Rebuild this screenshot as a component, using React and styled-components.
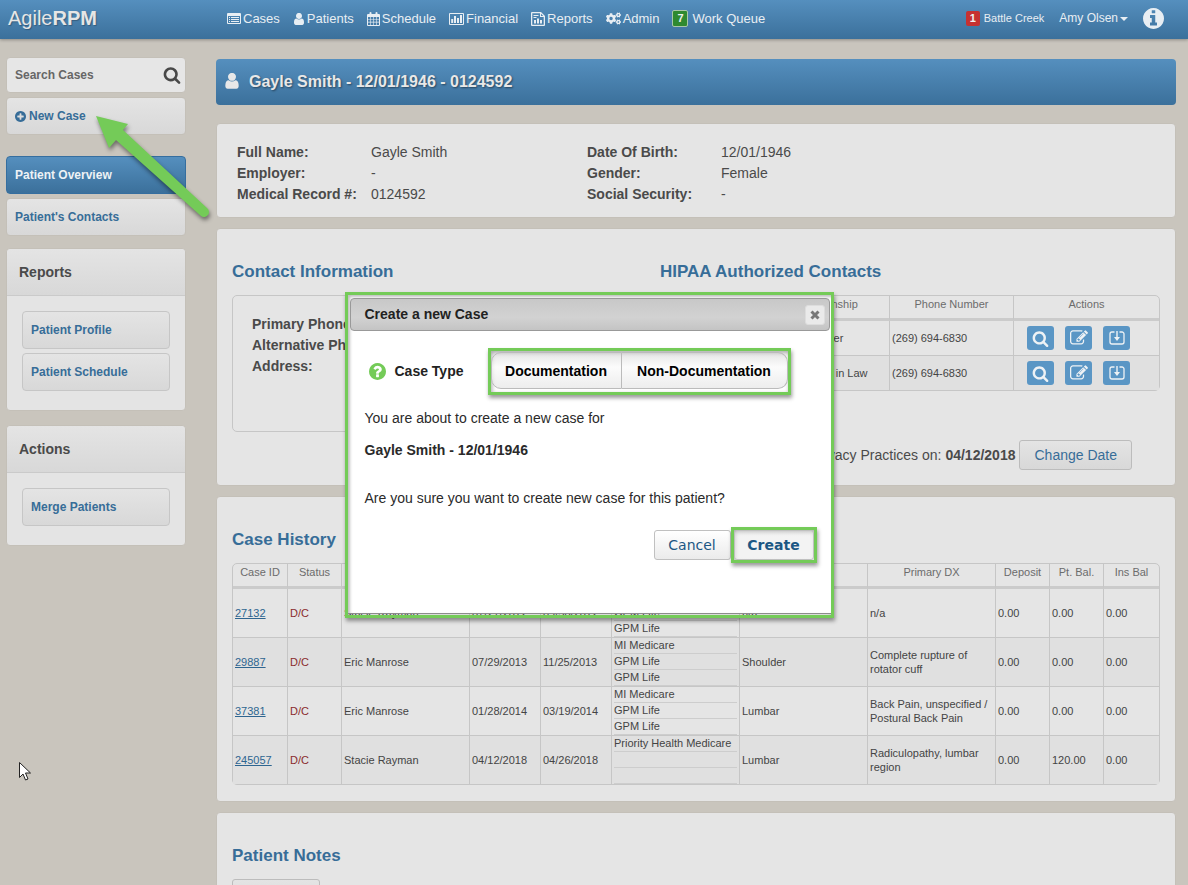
import React from 'react';
import styled, { createGlobalStyle, css } from 'styled-components';
import { FaCogs } from 'react-icons/fa';

const GREEN = '#74cb58';
const LINE = '#c6c6c6';

const GlobalStyle = createGlobalStyle`
  *, *::before, *::after { box-sizing: border-box; }
  body {
    margin: 0;
    background: #c9c5bd;
    color: #4a4a4a;
    font-family: 'Liberation Sans', Arial, sans-serif;
    font-size: 14px;
    line-height: 21px;
  }
  button, input { font-family: inherit; }
  h1, h2, h3, p, ul, dl, dd { margin: 0; padding: 0; }
`;

/* ---------- icons ---------- */

const DISC =
  'M1664 896q0 209-103 385.5t-279.5 279.5-385.5 103-385.5-103-279.5-279.5-103-385.5 103-385.5 279.5-279.5 385.5-103 385.5 103 279.5 279.5 103 385.5z';

const PATHS = {
  search:
    'M1216 832q0-185-131.5-316.5t-316.5-131.5-316.5 131.5-131.5 316.5 131.5 316.5 316.5 131.5 316.5-131.5 131.5-316.5zm512 832q0 52-38 90t-90 38q-54 0-90-38l-343-342q-179 124-399 124-143 0-273.5-55.5t-225-150-150-225-55.5-273.5 55.5-273.5 150-225 225-150 273.5-55.5 273.5 55.5 225 150 150 225 55.5 273.5q0 220-124 399l343 343q37 37 37 90z',
  user:
    'M1536 1399q0 109-62.5 187t-150.5 78h-854q-88 0-150.5-78t-62.5-187q0-85 8.5-160.5t31.5-152 58.5-131 94-89 134.5-34.5q131 128 313 128t313-128q76 0 134.5 34.5t94 89 58.5 131 31.5 152 8.5 160.5zm-256-887q0 159-112.5 271.5t-271.5 112.5-271.5-112.5-112.5-271.5 112.5-271.5 271.5-112.5 271.5 112.5 112.5 271.5z',
  edit:
    'M888 1184l116-116-152-152-116 116v56h96v96h56zm440-720q-16-16-33 1l-350 350q-17 17-1 33t33-1l350-350q17-17 1-33zm80 594v190q0 119-84.5 203.5t-203.5 84.5h-832q-119 0-203.5-84.5t-84.5-203.5v-832q0-119 84.5-203.5t203.5-84.5h832q63 0 117 25 15 7 18 23 3 17-9 29l-49 49q-14 14-32 8-23-6-45-6h-832q-66 0-113 47t-47 113v832q0 66 47 113t113 47h832q66 0 113-47t47-113v-126q0-13 9-22l64-64q15-15 35-7t20 29zm-96-738l288 288-672 672h-288v-288zm444 132l-92 92-288-288 92-92q28-28 68-28t68 28l152 152q28 28 28 68t-28 68z',
  info:
    'M1152 1376v-160q0-14-9-23t-23-9h-96v-512q0-14-9-23t-23-9h-320q-14 0-23 9t-9 23v160q0 14 9 23t23 9h96v320h-96q-14 0-23 9t-9 23v160q0 14 9 23t23 9h448q14 0 23-9t9-23zm-128-896v-160q0-14-9-23t-23-9h-192q-14 0-23 9t-9 23v160q0 14 9 23t23 9h192q14 0 23-9t9-23z' + DISC,
  plus:
    'M1344 960v-128q0-26-19-45t-45-19h-256v-256q0-26-19-45t-45-19h-128q-26 0-45 19t-19 45v256h-256q-26 0-45 19t-19 45v128q0 26 19 45t45 19h256v256q0 26 19 45t45 19h128q26 0 45-19t19-45v-256h256q26 0 45-19t19-45z' + DISC,
  question:
    'M1024 1376v-192q0-14-9-23t-23-9h-192q-14 0-23 9t-9 23v192q0 14 9 23t23 9h192q14 0 23-9t9-23zm256-672q0-88-55.5-163t-138.5-116-170-41q-243 0-371 213-15 24 8 42l132 100q7 6 19 6 16 0 25-12 53-68 86-92 34-24 86-24 48 0 85.5 26t37.5 59q0 38-20 61t-68 45q-63 28-115.5 86.5t-52.5 125.5v36q0 14 9 23t23 9h192q14 0 23-9t9-23q0-19 21.5-49.5t54.5-49.5q32-18 49-28.5t46-35 44.5-48 28-60.5 12.5-81z' + DISC,
};

const BOXES = {
  search: '0 0 1792 1792',
  edit: '0 0 1792 1792',
  user: '128 144 1536 1536',
};

const Svg = styled.svg`
  display: block;
  flex: none;
  fill: currentColor;
`;

const Glyph = ({ name, size }) => (
  <Svg width={size} height={size} viewBox={BOXES[name] || '128 128 1536 1536'} aria-hidden="true">
    <path fillRule="evenodd" d={PATHS[name]} />
  </Svg>
);

const ListIcon = () => (
  <Svg width="14" height="12" viewBox="0 0 14 12" aria-hidden="true">
    <path fillRule="evenodd" d="M1 0h12a1 1 0 0 1 1 1v9a1 1 0 0 1-1 1H1a1 1 0 0 1-1-1V1a1 1 0 0 1 1-1zM1 3v7h12V3zM2 4h1v1H2zM4 4h8v1H4zM2 6h1v1H2zM4 6h8v1H4zM2 8h1v1H2zM4 8h8v1H4z" />
  </Svg>
);

const CalendarIcon = () => (
  <Svg width="13" height="14" viewBox="0 0 13 14" aria-hidden="true">
    <path fillRule="evenodd" d="M1 2h1.5V1a1 1 0 0 1 2 0v1h4V1a1 1 0 0 1 2 0v1H12a1 1 0 0 1 1 1v10a1 1 0 0 1-1 1H1a1 1 0 0 1-1-1V3a1 1 0 0 1 1-1zM1 5v2h2.2V5zM3.8 5v2h2.4V5zM6.8 5v2h2.4V5zM9.8 5v2H12V5zM1 7.6v2.2h2.2V7.6zM3.8 7.6v2.2h2.4V7.6zM6.8 7.6v2.2h2.4V7.6zM9.8 7.6v2.2H12V7.6zM1 10.4V13h2.2v-2.600zM3.800 10.400V13h2.400v-2.600zM6.800 10.400V13h2.400v-2.600zM9.800 10.400V13H12v-2.600z" />
  </Svg>
);

const ChartIcon = () => (
  <Svg width="15" height="12" viewBox="0 0 15 12" aria-hidden="true">
    <path fillRule="evenodd" d="M1 0h13a1 1 0 0 1 1 1v10a1 1 0 0 1-1 1H1a1 1 0 0 1-1-1V1a1 1 0 0 1 1-1zM1 1v10h13V1zM2.200 6h2v4h-2zM5 3h2v7H5zM8 5h2v5H8zM11 2h2v8h-2z" />
  </Svg>
);

const ReportIcon = () => (
  <Svg width="14" height="14" viewBox="0 0 14 14" aria-hidden="true">
    <path fillRule="evenodd" d="M1 0h9l4 4v9a1 1 0 0 1-1 1H1a1 1 0 0 1-1-1V1a1 1 0 0 1 1-1zM1.300 1.300v11.400h11.400V5H9V1.300zM10 1.800V4h2.200zM2.500 3h5v1h-5zM2.500 5h3v1h-3zM3 8h2v3.500H3zM6 6.500h2v5H6zM9 8h2v3.500H9z" />
  </Svg>
);

const DownloadIcon = () => (
  <Svg width="16" height="14" viewBox="0 0 16 14" aria-hidden="true">
    <path d="M5.500 1H3a2 2 0 0 0-2 2v8a2 2 0 0 0 2 2h10a2 2 0 0 0 2-2V3a2 2 0 0 0-2-2h-2.500" fill="none" stroke="currentColor" strokeWidth="1.300" />
    <path d="M7.300 0h1.400v6h2.300L8 10 5 6h2.300z" />
  </Svg>
);

const CrossIcon = () => (
  <Svg width="10" height="10" viewBox="0 0 10 10" aria-hidden="true">
    <path d="M1.500 1.500l7 7M8.500 1.500l-7 7" stroke="currentColor" strokeWidth="3" />
  </Svg>
);

/* ---------- top bar ---------- */

const blue = css`background: linear-gradient(#558fbe, #3b709b);`;
const grey = css`background: linear-gradient(#e4e4e4, #d8d8d8);`;

const Shell = styled.div`
  position: relative;
  height: 100vh;
  overflow: auto;
  scrollbar-width: none;
`;

const TopBar = styled.header`
  ${blue}
  display: flex;
  align-items: center;
  height: 39px;
  padding: 0 24px 2px 8px;
  color: #e8eef3;
  box-shadow: 0 1px 3px rgba(0, 0, 0, 0.3);
`;

const Logo = styled.a`
  width: 219px;
  color: #e6e6e6;
  font-size: 20px;
  text-decoration: none;
  text-shadow: 1px 1px 1px rgba(0, 0, 0, 0.25);
`;

const Nav = styled.nav`
  display: flex;
  flex: 1;
  gap: 13px;
`;

const TopLink = styled.a`
  display: flex;
  align-items: center;
  gap: ${(p) => p.$gap || 2}px;
  color: #e8eef3;
  font-size: ${(p) => p.$size || 13}px;
  text-decoration: none;
  white-space: nowrap;
`;

const Count = styled.span`
  display: grid;
  place-items: center;
  width: ${(p) => (p.$alert ? 14 : 16)}px;
  height: ${(p) => (p.$alert ? 15 : 17)}px;
  border: ${(p) => (p.$alert ? '0' : '1px solid #a9c8a9')};
  border-radius: 2px;
  background: ${(p) => (p.$alert ? '#c63131' : '#2f8a30')};
  color: #f0f0f0;
  font-size: 11px;
  font-weight: bold;
  line-height: 13px;
`;

const Tools = styled.div`
  display: flex;
  align-items: center;
  gap: 15px;
`;

const Caret = styled.span`
  border: 4px solid transparent;
  border-top-color: currentColor;
  border-bottom: 0;
`;

/* ---------- sidebar ---------- */

const Page = styled.div`
  display: flex;
  align-items: flex-start;
  gap: 30px;
  padding: 18px 12px 20px 6px;
`;

const Sidebar = styled.aside`
  display: flex;
  flex: none;
  flex-direction: column;
  gap: 14px;
  width: 180px;
`;

const Stack = styled.div`
  display: flex;
  flex-direction: column;
  gap: 4px;
  margin-bottom: ${(p) => p.$after || 0}px;
`;

const SearchBox = styled.form`
  display: flex;
  align-items: center;
  height: 36px;
  padding: 0 4px 0 8px;
  border: 1px solid #c4c0b8;
  border-radius: 4px;
  background: #e6e6e6;
`;

const SearchField = styled.input`
  flex: 1;
  min-width: 0;
  padding: 0;
  border: 0;
  outline: 0;
  background: none;
  color: #555;
  font-size: 12px;
  font-weight: bold;
  &::placeholder { color: #666; opacity: 1; }
`;

const PlainButton = styled.button`
  padding: 0;
  border: 0;
  background: none;
  color: #484848;
`;

const SideLink = styled.a`
  ${(p) => (p.$active ? blue : grey)}
  display: flex;
  align-items: center;
  gap: 3px;
  height: 38px;
  padding: 0 8px;
  border: 1px solid ${(p) => (p.$active ? '#356e9f' : p.$boxed ? LINE : '#c4c0b8')};
  border-radius: 4px;
  color: ${(p) => (p.$active ? '#eef2f5' : '#376d98')};
  font-size: 12px;
  font-weight: bold;
  text-decoration: none;
`;

const SidePanel = styled.section`
  border: 1px solid #c4c0b8;
  border-radius: 4px;
  background: #e4e4e4;
`;

const SideTitle = styled.h3`
  ${grey}
  height: 47px;
  padding: 0 12px;
  border-bottom: 1px solid #cacaca;
  border-radius: 4px 4px 0 0;
  color: #4a4a4a;
  font-size: 14px;
  line-height: 46px;
`;

const SideBody = styled.div`
  padding: 15px 15px 19px;
`;

/* ---------- main column ---------- */

const Main = styled.main`
  display: flex;
  flex: 1;
  flex-direction: column;
  gap: 10px;
  min-width: 0;
  padding-top: 2px;
`;

const Banner = styled.div`
  ${blue}
  display: flex;
  align-items: center;
  gap: 9px;
  height: 46px;
  margin-bottom: 8px;
  padding: 0 8px 2px;
  border-radius: 4px;
  color: #e8e8e8;
  text-shadow: 1px 1px 2px rgba(0, 0, 0, 0.45);
`;

const BannerTitle = styled.h1`
  font-size: 16px;
`;

const Panel = styled.section`
  padding: ${(p) => p.$pad || '32px 17px 15px 15px'};
  border: 1px solid #c4c0b8;
  border-radius: 4px;
  background: #e5e5e5;
`;

const PanelTitle = styled.h2`
  margin-bottom: 12px;
  color: #376d98;
  font-size: 17px;
  line-height: 22px;
`;

const Facts = styled.dl`
  display: grid;
  grid-template-columns: 134px 216px 134px 1fr;
`;

const Term = styled.dt`
  font-weight: bold;
`;

const Split = styled.div`
  display: grid;
  grid-template-columns: 400px 1fr;
  gap: 28px;
`;

const AddressCard = styled.div`
  height: 137px;
  padding: 18px 19px;
  border: 1px solid ${LINE};
  border-radius: 5px;
  font-weight: bold;
`;

const Grid = styled.table`
  width: 100%;
  border: 1px solid ${LINE};
  border-radius: 5px;
  border-spacing: 0;
  table-layout: fixed;
  color: #444;
  font-size: 11px;
  line-height: 14px;
  tbody tr:nth-child(even) { background: #e0e0e0; }
  th:last-child, td:last-child { border-right: 0; }
`;

const Head = styled.th`
  height: 25px;
  padding: 0 0 6px;
  border-right: 1px solid ${LINE};
  border-bottom: 3px solid #cbcbcb;
  color: #6c6c6c;
  font-weight: normal;
`;

const Cell = styled.td`
  height: ${(p) => p.$tall || 49}px;
  padding: 0 2px;
  border-right: 1px solid ${LINE};
  border-bottom: 1px solid ${LINE};
  text-align: ${(p) => (p.$center ? 'center' : 'left')};
  tr:last-child > & {
    height: ${(p) => (p.$tall || 49) - 1}px;
    border-bottom: 0;
  }
`;

const Status = styled.span`
  color: #8a2c2c;
`;

const CaseLink = styled.a`
  color: #2e6590;
`;

const Insurer = styled.div`
  height: 16px;
  border-bottom: 1px solid #cdcdcd;
`;

const RowTools = styled.div`
  display: flex;
  gap: 11px;
  padding-left: 11px;
`;

const RowTool = styled.button`
  display: grid;
  place-items: center;
  width: 27px;
  height: 24px;
  padding: 0;
  border: 0;
  border-radius: 3px;
  background: #5a96c5;
  color: #eef2f5;
`;

const Privacy = styled.div`
  display: flex;
  align-items: center;
  justify-content: flex-end;
  gap: 4px;
  margin-top: 49px;
  padding-right: 28px;
`;

const SoftButton = styled.button`
  ${grey}
  height: 30px;
  padding: 0 14px;
  border: 1px solid #bcbcbc;
  border-radius: 3px;
  color: #376d98;
  font-size: 14px;
`;

const TabButton = styled(SoftButton)`
  width: 88px;
`;

/* ---------- dialog ---------- */

const Overlay = styled.div`
  position: absolute;
  inset: 0;
  display: flex;
  align-items: flex-start;
  justify-content: center;
  padding: 292px 10px 0 0;
`;

const Callout = styled.div`
  border: 3px solid ${GREEN};
  box-shadow: 1px 3px 4px rgba(0, 0, 0, 0.4), inset 1px 2px 4px rgba(0, 0, 0, 0.35);
`;

const DialogCallout = styled(Callout)`
  width: 489px;
  padding-bottom: 1px;
`;

const Dialog = styled.section`
  height: 319px;
  padding: 3px 1px 0 2px;
  border-bottom: 1px solid #8c8c8c;
  background: #fff;
  box-shadow: inset 2px 2px 3px rgba(0, 0, 0, 0.25);
  color: #2a2a2a;
`;

const DialogBar = styled.header`
  display: flex;
  align-items: center;
  justify-content: space-between;
  height: 33px;
  padding: 0 4px 0 14px;
  border: 1px solid #999;
  border-radius: 4px;
  background: linear-gradient(#c8c8c8, #d2d2d2 60%, #c4c4c4);
`;

const DialogTitle = styled.h2`
  font-size: 14px;
  color: #222;
`;

const CloseButton = styled.button`
  display: grid;
  place-items: center;
  width: 20px;
  height: 20px;
  padding: 0;
  border: 1px solid #ddd;
  border-radius: 3px;
  background: #eaeaea;
  color: #777;
`;

const DialogBody = styled.div`
  padding: 17px 13px 0 15px;
`;

const TypeRow = styled.div`
  display: flex;
  align-items: center;
  padding-left: 4px;
  color: ${GREEN};
`;

const TypeLabel = styled.span`
  width: 102px;
  padding-left: 9px;
  color: #222;
  font-weight: bold;
`;

const TypeCallout = styled(Callout)`
  display: flex;
  width: 303px;
  padding: 1px 0 3px;
`;

const TypeButton = styled.button`
  flex: ${(p) => (p.$grow ? 1 : 'none')};
  width: ${(p) => (p.$grow ? 'auto' : '131px')};
  height: 37px;
  padding: 0;
  border: 1px solid #bbb;
  border-left-width: ${(p) => (p.$grow ? 0 : 1)}px;
  border-radius: ${(p) => (p.$grow ? '0 10px 10px 0' : '10px 0 0 10px')};
  background: linear-gradient(rgba(205, 205, 205, 0.5), rgba(250, 250, 250, 0.7) 40%, rgba(225, 225, 225, 0.6));
  color: #000;
  font-size: 14px;
  font-weight: bold;
`;

const Message = styled.p`
  margin-top: ${(p) => p.$space}px;
`;

const Footer = styled.div`
  display: flex;
  align-items: center;
  justify-content: flex-end;
  margin-top: 18px;
`;

const DialogButton = styled.button`
  width: ${(p) => (p.$strong ? 80 : 77)}px;
  height: 30px;
  padding: 0;
  border: 1px solid #c0c0c0;
  border-radius: 3px;
  background: ${(p) => (p.$strong ? 'linear-gradient(rgba(225,225,225,.4), rgba(235,235,235,.6))' : 'linear-gradient(#fff, #ebebeb)')};
  color: #1c5784;
  font-family: 'DejaVu Sans', Verdana, sans-serif;
  font-size: 14px;
  font-weight: ${(p) => (p.$strong ? 'bold' : 'normal')};
`;

/* ---------- floating marks ---------- */

const ArrowMark = styled.svg`
  position: absolute;
  left: 90px;
  top: 110px;
  pointer-events: none;
  filter: drop-shadow(1px 3px 2px rgba(0, 0, 0, 0.45));
`;

const PointerMark = styled.svg`
  position: absolute;
  left: 18px;
  top: 761px;
  pointer-events: none;
`;

/* ---------- data ---------- */

const CASE_COLS = [
  ['Case ID', 55], ['Status', 54], ['Therapist', 128], ['Start Date', 71], ['D/C Date', 71],
  ['Insurance', 128], ['Body Part', 128], ['Primary DX', 128], ['Deposit', 54], ['Pt. Bal.', 54], ['Ins Bal', 55],
];

const CASES = [
  { id: '27132', who: 'Stacie Rayman', from: '07/27/2012', to: '09/30/2012', ins: ['MI Medicare', 'GPM Life', 'GPM Life'], part: 'n/a', dx: 'n/a', bal: '0.00' },
  { id: '29887', who: 'Eric Manrose', from: '07/29/2013', to: '11/25/2013', ins: ['MI Medicare', 'GPM Life', 'GPM Life'], part: 'Shoulder', dx: 'Complete rupture of rotator cuff', bal: '0.00' },
  { id: '37381', who: 'Eric Manrose', from: '01/28/2014', to: '03/19/2014', ins: ['MI Medicare', 'GPM Life', 'GPM Life'], part: 'Lumbar', dx: 'Back Pain, unspecified / Postural Back Pain', bal: '0.00' },
  { id: '245057', who: 'Stacie Rayman', from: '04/12/2018', to: '04/26/2018', ins: ['Priority Health Medicare', '', ''], part: 'Lumbar', dx: 'Radiculopathy, lumbar region', bal: '120.00' },
];

const CONTACT_COLS = [['Name', 105], ['Relationship', 124], ['Phone Number', 124], ['Actions', 145]];
const CONTACTS = ['Father', 'Daughter in Law'];

const Columns = ({ cols }) => (
  <>
    <colgroup>{cols.map(([name, width]) => <col key={name} width={width} />)}</colgroup>
    <thead><tr>{cols.map(([name]) => <Head key={name} scope="col">{name}</Head>)}</tr></thead>
  </>
);

export default function App() {
  return (
    <Shell>
      <GlobalStyle />
      <TopBar>
        <Logo href="#home">Agile<b>RPM</b></Logo>
        <Nav>
          <TopLink href="#cases"><ListIcon />Cases</TopLink>
          <TopLink href="#patients"><Glyph name="user" size={12} />Patients</TopLink>
          <TopLink href="#schedule"><CalendarIcon />Schedule</TopLink>
          <TopLink href="#financial"><ChartIcon />Financial</TopLink>
          <TopLink href="#reports"><ReportIcon />Reports</TopLink>
          <TopLink href="#admin"><FaCogs size={15} />Admin</TopLink>
          <TopLink href="#queue" $gap={4}><Count>7</Count>Work Queue</TopLink>
        </Nav>
        <Tools>
          <TopLink href="#clinic" $size={11} $gap={4}><Count $alert>1</Count>Battle Creek</TopLink>
          <TopLink href="#account" $size={12} $gap={2}>Amy Olsen<Caret /></TopLink>
          <TopLink href="#info" aria-label="Information"><Glyph name="info" size={21} /></TopLink>
        </Tools>
      </TopBar>

      <Page>
        <Sidebar>
          <Stack $after={7}>
            <SearchBox>
              <SearchField type="text" aria-label="Search Cases" placeholder="Search Cases" />
              <PlainButton type="button" aria-label="Search"><Glyph name="search" size={18} /></PlainButton>
            </SearchBox>
            <SideLink href="#new"><Glyph name="plus" size={11} />New Case</SideLink>
          </Stack>
          <Stack $after={-2}>
            <SideLink href="#overview" $active>Patient Overview</SideLink>
            <SideLink href="#contacts">Patient's Contacts</SideLink>
          </Stack>
          <SidePanel>
            <SideTitle>Reports</SideTitle>
            <SideBody>
              <Stack>
                <SideLink href="#profile" $boxed>Patient Profile</SideLink>
                <SideLink href="#patient-schedule" $boxed>Patient Schedule</SideLink>
              </Stack>
            </SideBody>
          </SidePanel>
          <SidePanel>
            <SideTitle>Actions</SideTitle>
            <SideBody><SideLink href="#merge" $boxed>Merge Patients</SideLink></SideBody>
          </SidePanel>
        </Sidebar>

        <Main>
          <Banner>
            <Glyph name="user" size={16} />
            <BannerTitle>Gayle Smith - 12/01/1946 - 0124592</BannerTitle>
          </Banner>

          <Panel $pad="18px 20px 12px">
            <Facts>
              <Term>Full Name:</Term><dd>Gayle Smith</dd>
              <Term>Date Of Birth:</Term><dd>12/01/1946</dd>
              <Term>Employer:</Term><dd>-</dd>
              <Term>Gender:</Term><dd>Female</dd>
              <Term>Medical Record #:</Term><dd>0124592</dd>
              <Term>Social Security:</Term><dd>-</dd>
            </Facts>
          </Panel>

          <Panel>
            <Split>
              <div>
                <PanelTitle>Contact Information</PanelTitle>
                <AddressCard>
                  <p>Primary Phone:</p>
                  <p>Alternative Phone:</p>
                  <p>Address:</p>
                </AddressCard>
              </div>
              <div>
                <PanelTitle>HIPAA Authorized Contacts</PanelTitle>
                <Grid>
                  <Columns cols={CONTACT_COLS} />
                  <tbody>
                    {CONTACTS.map((relation) => (
                      <tr key={relation}>
                        <Cell $tall={35} />
                        <Cell $tall={35} $center>{relation}</Cell>
                        <Cell $tall={35}>(269) 694-6830</Cell>
                        <Cell $tall={35}>
                          <RowTools>
                            <RowTool aria-label="View"><Glyph name="search" size={17} /></RowTool>
                            <RowTool aria-label="Edit"><Glyph name="edit" size={18} /></RowTool>
                            <RowTool aria-label="Download"><DownloadIcon /></RowTool>
                          </RowTools>
                        </Cell>
                      </tr>
                    ))}
                  </tbody>
                </Grid>
                <Privacy>
                  <span>Notice of Privacy Practices on:</span>
                  <b>04/12/2018</b>
                  <SoftButton>Change Date</SoftButton>
                </Privacy>
              </div>
            </Split>
          </Panel>

          <Panel $pad="32px 17px 16px 15px">
            <PanelTitle>Case History</PanelTitle>
            <Grid>
              <Columns cols={CASE_COLS} />
              <tbody>
                {CASES.map((c) => (
                  <tr key={c.id}>
                    <Cell><CaseLink href={`#case-${c.id}`}>{c.id}</CaseLink></Cell>
                    <Cell><Status>D/C</Status></Cell>
                    <Cell>{c.who}</Cell>
                    <Cell>{c.from}</Cell>
                    <Cell>{c.to}</Cell>
                    <Cell>{c.ins.map((name, i) => <Insurer key={i}>{name}</Insurer>)}</Cell>
                    <Cell>{c.part}</Cell>
                    <Cell>{c.dx}</Cell>
                    <Cell>0.00</Cell>
                    <Cell>{c.bal}</Cell>
                    <Cell>0.00</Cell>
                  </tr>
                ))}
              </tbody>
            </Grid>
          </Panel>

          <Panel>
            <PanelTitle>Patient Notes</PanelTitle>
            <TabButton aria-label="Add note" />
          </Panel>
        </Main>
      </Page>

      <Overlay>
        <DialogCallout>
          <Dialog role="dialog" aria-labelledby="dialog-title">
            <DialogBar>
              <DialogTitle id="dialog-title">Create a new Case</DialogTitle>
              <CloseButton aria-label="Close"><CrossIcon /></CloseButton>
            </DialogBar>
            <DialogBody>
              <TypeRow>
                <Glyph name="question" size={17} />
                <TypeLabel>Case Type</TypeLabel>
                <TypeCallout role="group" aria-label="Case Type">
                  <TypeButton>Documentation</TypeButton>
                  <TypeButton $grow>Non-Documentation</TypeButton>
                </TypeCallout>
              </TypeRow>
              <Message $space={13}>You are about to create a new case for</Message>
              <Message $space={11}><b>Gayle Smith - 12/01/1946</b></Message>
              <Message $space={27}>Are you sure you want to create new case for this patient?</Message>
              <Footer>
                <DialogButton>Cancel</DialogButton>
                <Callout><DialogButton $strong>Create</DialogButton></Callout>
              </Footer>
            </DialogBody>
          </Dialog>
        </DialogCallout>
      </Overlay>

      <ArrowMark width="126" height="116" viewBox="0 0 126 116" aria-hidden="true">
        <path d="M6 6L38 14L33 20L117 98A4.500 4.500 0 0 1 111 106L26 30L19 38Z" fill={GREEN} />
      </ArrowMark>
      <PointerMark width="14" height="21" viewBox="0 0 14 21" aria-hidden="true">
        <path d="M1.500 1.500v15l3.500-3.500 2.500 6 2.500-1-2.500-6h5z" fill="#fff" stroke="#222" />
      </PointerMark>
    </Shell>
  );
}
